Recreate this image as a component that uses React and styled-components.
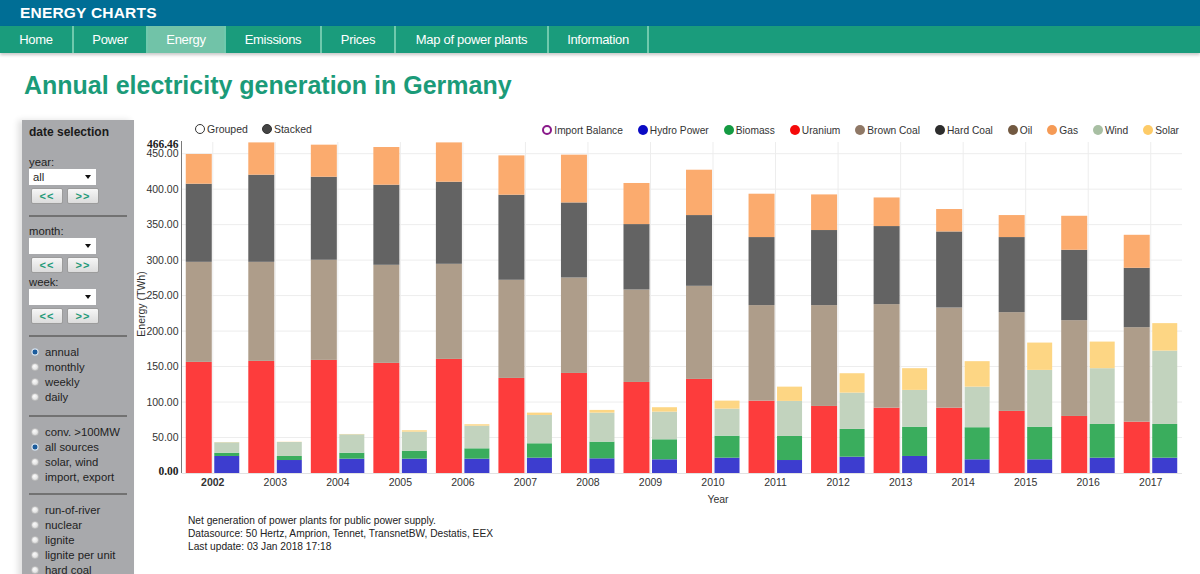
import React from "react";
import styled, { createGlobalStyle } from "styled-components";

const GlobalStyle = createGlobalStyle`
  html, body {
    margin: 0;
    padding: 0;
    overflow: hidden;
    background: #fff;
  }
  body {
    font-family: "Liberation Sans", Arial, sans-serif;
    color: #222;
  }
`;

const NAV = [
  { label: "Home", width: 74 },
  { label: "Power", width: 74 },
  { label: "Energy", width: 78, active: true },
  { label: "Emissions", width: 96 },
  { label: "Prices", width: 74 },
  { label: "Map of power plants", width: 153 },
  { label: "Information", width: 100 },
];

const LEGEND = [
  { label: "Import Balance", color: "#8a1a8a", hollow: true },
  { label: "Hydro Power", color: "#0a0ac4" },
  { label: "Biomass", color: "#149a42" },
  { label: "Uranium", color: "#f50a0a" },
  { label: "Brown Coal", color: "#8f7866" },
  { label: "Hard Coal", color: "#2d2d2d" },
  { label: "Oil", color: "#725941" },
  { label: "Gas", color: "#f59a55" },
  { label: "Wind", color: "#a8bfa3" },
  { label: "Solar", color: "#fdcb68" },
];

const YEARS = [
  2002, 2003, 2004, 2005, 2006, 2007, 2008, 2009,
  2010, 2011, 2012, 2013, 2014, 2015, 2016, 2017,
];

// stack tops in TWh: uranium, brown coal, hard coal, gas
const CONV = [
  [156.6, 297.6, 407.7, 449.6],
  [158, 297.6, 420.4, 465.9],
  [159.4, 300.5, 417.5, 462.7],
  [155.2, 293.4, 406.3, 459.4],
  [160.8, 294.8, 410.5, 465.9],
  [134, 272.3, 392.2, 447.6],
  [141, 275.5, 381.3, 448.6],
  [128.3, 258.6, 350.8, 408.7],
  [132.6, 263.8, 363.5, 427.4],
  [102, 236.6, 332.5, 393.6],
  [94.5, 236.6, 342.4, 392.6],
  [92.1, 238, 348, 388.3],
  [92.1, 233.2, 340.4, 372],
  [87.5, 226.7, 332.5, 363.5],
  [80.4, 215.4, 314.6, 362.5],
  [72.4, 205.5, 289.2, 335.7],
];
const CONV_COLORS = ["#fd3c3c", "#ae9d8a", "#636363", "#fbab6e"];

// stack tops in TWh: hydro, biomass, wind, solar
const RENEW = [
  [24, 28.6, 43.3, 43.6],
  [18.3, 24, 43.7, 44],
  [20.2, 28.6, 54.6, 55],
  [20.2, 31.5, 58.3, 60.2],
  [20.2, 34.8, 66.7, 68.7],
  [21.6, 41.9, 81.8, 85.1],
  [20.7, 44.2, 85.1, 88.9],
  [19.3, 47.5, 86.5, 92.7],
  [21.6, 52.6, 90.7, 102],
  [18.3, 52.2, 101.6, 121.7],
  [23, 62.1, 113.3, 140.6],
  [24, 65.3, 117.1, 147.7],
  [19.3, 64.5, 121.7, 157.6],
  [19.3, 65.3, 145.3, 183.8],
  [21.6, 69.1, 147.7, 185.2],
  [21.6, 69.1, 172.5, 211.2],
];
const RENEW_COLORS = ["#3d3dcf", "#3aad5d", "#c2d3be", "#fdd684"];

const TICKS = [50, 100, 150, 200, 250, 300, 350, 400, 450];

const W = 1066;
const H = 370;
const P = { left: 47.5, right: 1048, top: 4, bottom: 335 };
const MAX = 466.46;
const STEP = (P.right - P.left) / YEARS.length;
const yOf = (v) => P.bottom - (v / MAX) * (P.bottom - P.top);
const cx = (i) => P.left + STEP * (i + 0.5);

const Stack = ({ x, width, tops, colors }) => {
  let prev = 0;
  return tops.map((top, k) => {
    const y = yOf(top);
    const h = yOf(prev) - y;
    prev = top;
    return <rect key={k} x={x} y={y} width={width} height={h} fill={colors[k]} />;
  });
};

const Chart = () => (
  <ChartSvg width={W} height={H} viewBox={`0 0 ${W} ${H}`}>
    {TICKS.map((t) => (
      <line key={t} x1={P.left} x2={P.right} y1={yOf(t)} y2={yOf(t)} stroke="#ededed" />
    ))}
    {YEARS.map((y, i) => (
      <line key={y} x1={cx(i)} x2={cx(i)} y1={P.top} y2={P.bottom} stroke="#ededed" />
    ))}
    {YEARS.map((y, i) => (
      <g key={y}>
        <Stack x={cx(i) - 27} width={26} tops={CONV[i]} colors={CONV_COLORS} />
        <Stack x={cx(i) + 1.5} width={25} tops={RENEW[i]} colors={RENEW_COLORS} />
      </g>
    ))}
    <line x1={P.left} x2={P.left} y1={P.top - 1} y2={P.bottom} stroke="#7a7a7a" />
    <line x1={P.left} x2={P.right} y1={P.bottom + 0.5} y2={P.bottom + 0.5} stroke="#e2e2e2" />

    {TICKS.map((t) => (
      <text key={t} x={P.left - 3} y={yOf(t) + 3.5} textAnchor="end" fill="#333">
        {t.toFixed(2)}
      </text>
    ))}
    <BoldTick x={P.left - 3} y={9.5} textAnchor="end">466.46</BoldTick>
    <BoldTick x={P.left - 3} y={P.bottom + 2} textAnchor="end">0.00</BoldTick>

    <text x={8} y={166} transform="rotate(-90 8 166)" textAnchor="middle" dominantBaseline="middle" fill="#333">
      Energy (TWh)
    </text>

    {YEARS.map((y, i) => (
      <text
        key={y}
        x={cx(i)}
        y={347.5}
        textAnchor="middle"
        fill="#333"
        fontWeight={i === 0 ? 700 : 400}
      >
        {y}
      </text>
    ))}
    <text x={584} y={364.5} textAnchor="middle" fill="#333">Year</text>
  </ChartSvg>
);

const App = () => (
  <>
    <GlobalStyle />
    <TopBar>
      <Brand>ENERGY CHARTS</Brand>
    </TopBar>
    <NavBar>
      {NAV.map((n) => (
        <NavItem key={n.label} $width={n.width} $active={n.active}>
          {n.label}
        </NavItem>
      ))}
    </NavBar>
    <Title>Annual electricity generation in Germany</Title>
    <Content>
      <Sidebar>
        <SideTitle>date selection</SideTitle>
        <FieldLabel $gap={16}>year:</FieldLabel>
        <Select>
          <span>all</span>
          <Caret />
        </Select>
        <StepButtons />
        <Divider />
        <FieldLabel>month:</FieldLabel>
        <Select>
          <span />
          <Caret />
        </Select>
        <StepButtons />
        <FieldLabel $gap={2}>week:</FieldLabel>
        <Select>
          <span />
          <Caret />
        </Select>
        <StepButtons />
        <Divider />
        <RadioGroup items={["annual", "monthly", "weekly", "daily"]} checked="annual" />
        <Divider />
        <RadioGroup
          items={["conv. >100MW", "all sources", "solar, wind", "import, export"]}
          checked="all sources"
        />
        <Divider $top={9} />
        <RadioGroup
          items={["run-of-river", "nuclear", "lignite", "lignite per unit", "hard coal", "gas"]}
        />
      </Sidebar>
      <ChartColumn>
        <ChartHeader>
          <Modes>
            <LegendItem>
              <ModeDot />
              Grouped
            </LegendItem>
            <LegendItem>
              <ModeDot $filled />
              Stacked
            </LegendItem>
          </Modes>
          <Legend>
            {LEGEND.map((l) => (
              <LegendItem key={l.label}>
                <LegendDot $color={l.color} $hollow={l.hollow} />
                {l.label}
              </LegendItem>
            ))}
          </Legend>
        </ChartHeader>
        <Chart />
        <Footnote>
          <div>Net generation of power plants for public power supply.</div>
          <div>Datasource: 50 Hertz, Amprion, Tennet, TransnetBW, Destatis, EEX</div>
          <div>Last update: 03 Jan 2018 17:18</div>
        </Footnote>
      </ChartColumn>
    </Content>
  </>
);

const StepButtons = () => (
  <ButtonRow>
    <StepButton>&lt;&lt;</StepButton>
    <StepButton>&gt;&gt;</StepButton>
  </ButtonRow>
);

const RadioGroup = ({ items, checked }) => (
  <RadioList>
    {items.map((it) => (
      <RadioRow key={it}>
        <RadioDot $checked={it === checked} />
        {it}
      </RadioRow>
    ))}
  </RadioList>
);

const TopBar = styled.div`
  height: 26px;
  background: #006e95;
  display: flex;
  align-items: center;
  padding-left: 20px;
`;

const Brand = styled.div`
  color: #fff;
  font-size: 15.5px;
  font-weight: 700;
  letter-spacing: 0.2px;
`;

const NavBar = styled.div`
  height: 27px;
  background: #1a9c7c;
  display: flex;
  box-shadow: 0 2px 3px rgba(0, 0, 0, 0.22);
  position: relative;
`;

const NavItem = styled.div`
  box-sizing: border-box;
  width: ${(p) => p.$width}px;
  display: flex;
  align-items: center;
  justify-content: center;
  color: #fff;
  font-size: 13px;
  letter-spacing: -0.3px;
  border-right: 2px solid #6fc9ad;
  background: ${(p) => (p.$active ? "#71c3a8" : "transparent")};
`;

const Title = styled.h1`
  margin: 18px 0 0 24px;
  font-size: 25px;
  line-height: 28px;
  font-weight: 700;
  color: #1b9b79;
`;

const Content = styled.div`
  display: flex;
  margin-top: 21px;
`;

const Sidebar = styled.div`
  box-sizing: border-box;
  width: 112px;
  margin-left: 22px;
  height: 480px;
  background: #a8a9ac;
  padding: 5px 7px 0 7px;
  box-shadow: -4px 0 6px rgba(0, 0, 0, 0.12);
  font-size: 11.3px;
  color: #1e1e1e;
`;

const SideTitle = styled.div`
  font-size: 12px;
  font-weight: 700;
  line-height: 14px;
  color: #1a1a1a;
`;

const FieldLabel = styled.div`
  line-height: 14px;
  margin-top: ${(p) => p.$gap ?? 7}px;
`;

const Select = styled.div`
  box-sizing: border-box;
  width: 67px;
  height: 16px;
  background: #fff;
  display: flex;
  align-items: center;
  justify-content: space-between;
  padding: 0 5px 0 4px;
  font-size: 11.3px;
`;

const Caret = styled.span`
  width: 0;
  height: 0;
  border-left: 3px solid transparent;
  border-right: 3px solid transparent;
  border-top: 4px solid #111;
`;

const ButtonRow = styled.div`
  display: flex;
  gap: 4px;
  margin: 3px 0 0 2px;
`;

const StepButton = styled.div`
  box-sizing: border-box;
  width: 32px;
  height: 16px;
  border: 1px solid #9c9c9c;
  border-radius: 2px;
  background: linear-gradient(#f6f6f6, #dcdcdc);
  color: #1f9a78;
  font-size: 11px;
  font-weight: 700;
  letter-spacing: 1px;
  display: flex;
  align-items: center;
  justify-content: center;
`;

const Divider = styled.div`
  height: 2px;
  background: #727272;
  margin: ${(p) => p.$top ?? 11}px 0 7px;
`;

const RadioList = styled.div`
  display: flex;
  flex-direction: column;
`;

const RadioRow = styled.div`
  display: flex;
  align-items: center;
  gap: 6px;
  height: 15px;
  padding-left: 2px;
`;

const RadioDot = styled.span`
  box-sizing: border-box;
  width: 8px;
  height: 8px;
  border-radius: 50%;
  border: 1px solid ${(p) => (p.$checked ? "#c6d3e0" : "#bdbdbd")};
  background: ${(p) =>
    p.$checked
      ? "radial-gradient(circle, #1c5c9c 0 2.2px, #e3ebf3 2.8px)"
      : "radial-gradient(circle at 40% 35%, #fbfbfb, #d6d6d6)"};
`;

const ChartColumn = styled.div`
  flex: 1;
  display: flex;
  flex-direction: column;
`;

const ChartHeader = styled.div`
  height: 18px;
  display: flex;
  align-items: center;
  font-size: 10.5px;
  color: #333;
`;

const Modes = styled.div`
  display: flex;
  gap: 14px;
  margin-left: 61px;
`;

const Legend = styled.div`
  display: flex;
  gap: 15px;
  margin-left: auto;
  margin-right: 21px;
  padding-top: 2px;
  font-size: 10.2px;
`;

const LegendItem = styled.div`
  display: flex;
  align-items: center;
  gap: 2px;
  white-space: nowrap;
`;

const LegendDot = styled.span`
  box-sizing: border-box;
  width: 10px;
  height: 10px;
  border-radius: 50%;
  background: ${(p) => (p.$hollow ? "#fff" : p.$color)};
  border: ${(p) => (p.$hollow ? `2px solid ${p.$color}` : "none")};
`;

const ModeDot = styled.span`
  box-sizing: border-box;
  width: 10px;
  height: 10px;
  border-radius: 50%;
  background: ${(p) => (p.$filled ? "#444" : "#fff")};
  border: 1.5px solid #333;
`;

const ChartSvg = styled.svg`
  display: block;
  font-family: "Liberation Sans", Arial, sans-serif;
  font-size: 10.5px;
`;

const BoldTick = styled.text`
  font-family: "Liberation Serif", "Times New Roman", serif;
  font-weight: 700;
  font-size: 11.5px;
  fill: #222;
`;

const Footnote = styled.div`
  margin: 6px 0 0 54px;
  font-size: 10.2px;
  line-height: 13px;
  color: #222;
`;

export default App;
